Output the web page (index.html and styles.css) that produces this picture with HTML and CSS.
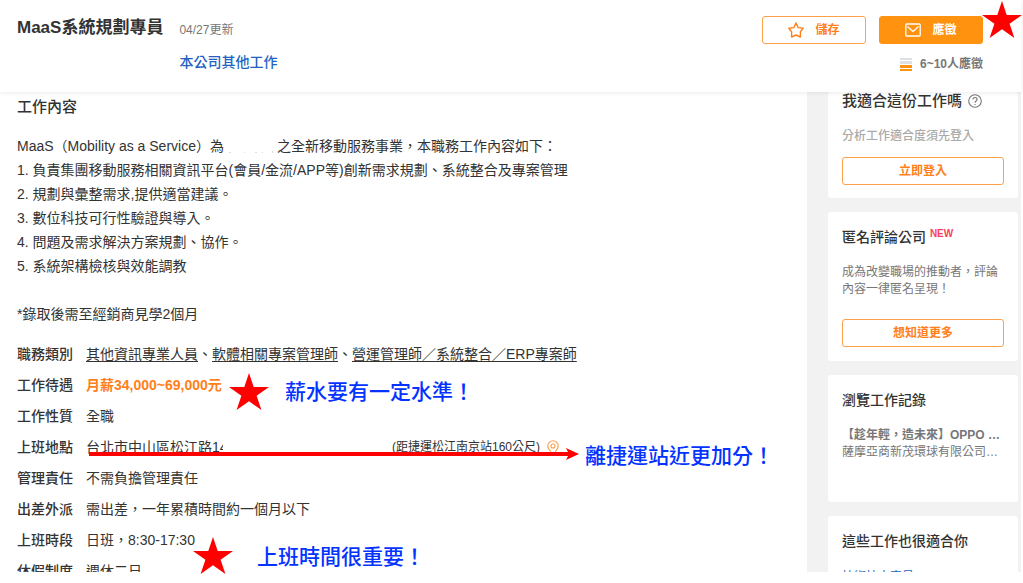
FILE: index.html
```html
<!DOCTYPE html>
<html lang="zh-Hant">
<head>
<meta charset="utf-8">
<title>MaaS系統規劃專員</title>
<link rel="stylesheet" href="styles.css">
</head>
<body>
<header class="topbar">
  <div class="job">
    <h1 class="job-title">MaaS系統規劃專員</h1>
    <span class="job-date">04/27更新</span>
    <a class="job-more" href="#">本公司其他工作</a>
  </div>
  <div class="actions">
    <div class="buttons">
      <button class="btn" type="button">
        <svg width="16" height="16" viewBox="0 0 16 16" fill="none" stroke="currentColor" stroke-width="1.4" stroke-linejoin="round"><path d="M8 1 10.2 5.6 15.2 6.2 12.400 9.700V15L8 13 3.600 15V9.700L.8 6.2 5.8 5.6Z"/></svg>
        儲存
      </button>
      <button class="btn btn-solid" type="button">
        <svg width="16" height="14" viewBox="0 0 16 14" fill="none" stroke="currentColor" stroke-width="1.3" stroke-linejoin="round"><rect x=".8" y="1" width="14.4" height="12" rx="1"/><path d="m2.5 3.5 5.5 5 5.5-5"/></svg>
        應徵
      </button>
    </div>
    <div class="applicants">
      <svg width="12" height="13" viewBox="0 0 12 13"><path fill="#dde1e3" d="M0 0h12v2H0zM0 3h12v3H0z"/><path fill="#ff920f" d="M0 7h12v3H0zM0 11h12v2H0z"/></svg>
      6~10人應徵
    </div>
  </div>
</header>

<div class="page">
  <main class="content">
    <h2 class="section-title">工作內容</h2>
    <div class="description">
      <p>MaaS（Mobility as a Service）為<span class="redacted"><svg width="53" height="14" viewBox="0 0 53 14" fill="#ddd"><path d="M5 12h2v1H5zM20 12h1v1h-1zM31 12h2v1h-2zM38 12h1v1h-1zM48 11h1v2h-1z"/></svg></span>之全新移動服務事業，本職務工作內容如下：</p>
      <p>1. 負責集團移動服務相關資訊平台(會員/金流/APP等)創新需求規劃、系統整合及專案管理</p>
      <p>2. 規劃與彙整需求,提供適當建議。</p>
      <p>3. 數位科技可行性驗證與導入。</p>
      <p>4. 問題及需求解決方案規劃、協作。</p>
      <p>5. 系統架構檢核與效能調教</p>
      <p class="note">*錄取後需至經銷商見學2個月</p>
    </div>
    <dl class="facts">
      <dt>職務類別</dt>
      <dd><a href="#">其他資訊專業人員</a>、<a href="#">軟體相關專案管理師</a>、<a href="#">營運管理師／系統整合／ERP專案師</a></dd>
      <dt>工作待遇</dt>
      <dd class="salary">月薪34,000~69,000元</dd>
      <dt>工作性質</dt>
      <dd>全職</dd>
      <dt>上班地點</dt>
      <dd class="place">
        <span class="street">台北市中山區松江路14</span>
        <span class="distance">(距捷運松江南京站160公尺)</span>
        <svg width="12" height="16" viewBox="0 0 12 16" fill="none" stroke="#f9a04f" stroke-width="1.1"><path d="M6 15C4.500 12 .8 9.300.8 6a5.200 5.200 0 0 1 10.400 0C11.200 9.300 7.500 12 6 15Z"/><circle cx="6" cy="6" r="2"/></svg>
      </dd>
      <dt>管理責任</dt>
      <dd>不需負擔管理責任</dd>
      <dt>出差外派</dt>
      <dd>需出差，一年累積時間約一個月以下</dd>
      <dt>上班時段</dt>
      <dd>日班，8:30-17:30</dd>
      <dt>休假制度</dt>
      <dd>週休二日</dd>
    </dl>
  </main>

  <aside class="sidebar">
    <section class="card card-first">
      <h3 class="card-title card-title-lg">我適合這份工作嗎
        <svg width="14" height="14" viewBox="0 0 14 14" fill="none" stroke="#777" stroke-width="1.100"><circle cx="7" cy="7" r="6.300"/><path d="M4.900 5.600c0-2.900 4.300-2.700 4.200-.2C9.100 7 7 7 7 8.700M7 9.900v1.200"/></svg>
      </h3>
      <p class="hint">分析工作適合度須先登入</p>
      <button class="btn btn-wide" type="button">立即登入</button>
    </section>
    <section class="card">
      <h3 class="card-title">匿名評論公司 <span class="new">NEW</span></h3>
      <p class="card-text">成為改變職場的推動者，評論內容一律匿名呈現！</p>
      <button class="btn btn-wide" type="button">想知道更多</button>
    </section>
    <section class="card card-history">
      <h3 class="card-title">瀏覽工作記錄</h3>
      <p class="card-text line strong">【趁年輕，造未來】OPPO 業務代表</p>
      <p class="card-text line">薩摩亞商新茂環球有限公司台灣分公司</p>
    </section>
    <section class="card">
      <h3 class="card-title">這些工作也很適合你</h3>
      <a class="suggestion" href="#">技術技文專員</a>
    </section>
  </aside>
</div>

<svg class="mark star star-apply" viewBox="0 0 40 37"><path d="M20 0 24.700 14H40L27.600 22.700 32.400 37 20 28.200 7.600 37 12.400 22.700 0 14H15.300Z"/></svg>
<svg class="mark star star-salary" viewBox="0 0 40 37"><path d="M20 0 24.700 14H40L27.600 22.700 32.400 37 20 28.200 7.600 37 12.400 22.700 0 14H15.300Z"/></svg>
<svg class="mark star star-hours" viewBox="0 0 40 37"><path d="M20 0 24.700 14H40L27.600 22.700 32.400 37 20 28.200 7.600 37 12.400 22.700 0 14H15.300Z"/></svg>
<svg class="mark arrow" width="490" height="12" viewBox="0 0 490 12"><path d="M0 4H480V8H0Z"/><path d="M477 0 490 6 477 12 480 6Z"/></svg>
<p class="mark label label-salary">薪水要有一定水準！</p>
<p class="mark label label-place">離捷運站近更加分！</p>
<p class="mark label label-hours">上班時間很重要！</p>
</body>
</html>
```
FILE: styles.css
```css
* { box-sizing: border-box; margin: 0; padding: 0; }

body {
  position: relative;
  display: flex;
  flex-direction: column;
  height: 100vh;
  padding: 0 2px 11px 0;
  overflow: hidden;
  background: #fff;
  color: #333;
  font: 14px/24px "Liberation Sans", "Noto Sans CJK TC", sans-serif;
}

svg { flex: none; }

.topbar {
  position: relative;
  z-index: 1;
  display: flex;
  justify-content: space-between;
  padding: 16px 38px 18px 17px;
  background: #fff;
  box-shadow: 0 1px 5px rgba(0, 0, 0, .08);
}

.job {
  display: grid;
  grid-template-columns: auto auto;
  column-gap: 16px;
  row-gap: 10px;
  align-content: start;
}
.job-title { font-size: 17px; line-height: 24px; }
.job-date { color: #777; font-size: 12px; line-height: 28px; }
.job-more {
  grid-column: 2;
  margin-top: -4px;
  color: #2162c2;
  font-weight: 500;
  text-decoration: none;
}

.actions { display: flex; flex-direction: column; align-items: flex-end; gap: 10px; }
.buttons { display: flex; gap: 13px; }

.btn {
  display: flex;
  align-items: center;
  justify-content: center;
  gap: 11px;
  width: 104px;
  height: 28px;
  border: 1px solid #ffa04a;
  border-radius: 3px;
  background: #fff;
  color: #ff7f1a;
  font: 700 12px/20px "Liberation Sans", "Noto Sans CJK TC", sans-serif;
}
.btn-solid { border-color: #ff920f; background: #ff920f; color: #fff; }
.btn-wide { width: 100%; }

.applicants {
  display: flex;
  align-items: center;
  gap: 8px;
  color: #777;
  font-size: 12px;
  font-weight: 700;
  line-height: 20px;
}

.page { display: flex; flex: 1; min-height: 0; overflow: hidden; }

.content { flex: 1; padding: 5px 17px 0; }
.section-title { font-size: 15px; font-weight: 500; line-height: 20px; }
.description { padding-top: 17px; }
.note { padding-top: 24px; }
.redacted svg { vertical-align: middle; }

.facts {
  display: grid;
  grid-template-columns: auto 1fr;
  grid-auto-rows: 31px;
  column-gap: 13px;
  padding-top: 13px;
  line-height: 31px;
}
.facts dt { font-weight: 500; }
.facts a { color: inherit; text-underline-offset: 2px; }
.salary { color: #ff7f1a; font-weight: 700; }
.place { display: flex; align-items: center; }
.street { width: 137px; margin-right: 169px; overflow: hidden; white-space: nowrap; }
.distance { margin-right: 7px; font-size: 12px; }

.sidebar {
  display: flex;
  flex-direction: column;
  gap: 14px;
  width: 214px;
  padding: 0 3px 0 21px;
  background: #f2f2f2;
}
.card { flex: none; padding: 15px 14px 14px; border-radius: 3px; background: #fff; }
.card-first { padding-top: 0; padding-bottom: 13px; }
.card-history { min-height: 127px; }
.card-title { font-size: 14px; font-weight: 500; line-height: 20px; }
.card-title-lg { display: flex; align-items: center; gap: 6px; font-size: 15px; line-height: 18px; }
.new { color: #f5435b; font-size: 10px; font-weight: 700; vertical-align: 5px; line-height: 10px; }
.hint { margin: 17px 0 12px; color: #aaa; font-size: 12px; font-weight: 500; line-height: 18px; }
.card-text { color: #777; font-size: 12px; line-height: 17px; }
.card-title + .card-text { margin-top: 17px; }
.card-text + .btn { margin-top: 21px; }
.line { overflow: hidden; text-overflow: ellipsis; white-space: nowrap; }
.strong { font-weight: 700; }
.suggestion {
  display: block;
  margin-top: 17px;
  color: #2162c2;
  font-size: 12px;
  line-height: 18px;
  text-decoration: none;
}

.mark { position: absolute; z-index: 2; fill: #f00; }
.star { width: 40px; height: 37px; }
.star-apply { top: 1px; right: 1px; }
.star-salary { top: 373px; left: 229px; }
.star-hours { top: 537px; left: 193px; }
.arrow { top: 448px; left: 89px; }
.label { color: #0433ff; font-size: 21px; font-weight: 500; line-height: 28px; white-space: nowrap; }
.label-salary { top: 378px; left: 285px; }
.label-place { top: 442px; left: 585px; }
.label-hours { top: 543px; left: 257px; }
```
